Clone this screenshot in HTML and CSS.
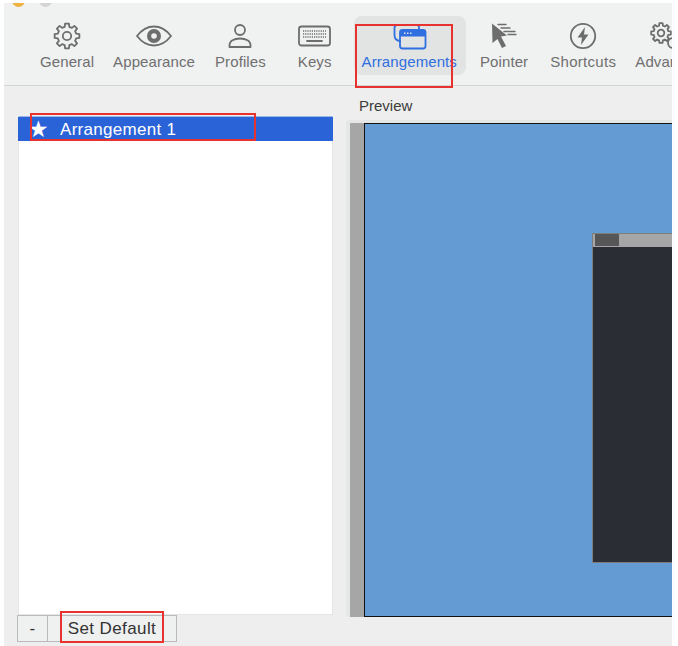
FILE: index.html
```html
<!DOCTYPE html>
<html lang="en">
<head>
<meta charset="utf-8">
<title>Arrangements</title>
<link rel="stylesheet" href="styles.css">
</head>
<body>
<div class="frame">
  <span class="light light-orange"></span>
  <span class="light light-gray"></span>
  <nav class="toolbar">
    <div class="tab tab-general">
      <svg class="icon" width="28" height="28" viewBox="-14 -14 28 28"><path class="line" d="M-1.96-12.35L1.96-12.35 2.3-9.2 4.89-8.14 7.35-10.1 10.1-7.35 8.14-4.89 9.2-2.3 12.35-1.96 12.35 1.96 9.2 2.3 8.14 4.89 10.1 7.35 7.35 10.1 4.89 8.14 2.3 9.2 1.96 12.35-1.96 12.35-2.3 9.2-4.89 8.14-7.35 10.1-10.1 7.35-8.14 4.89-9.2 2.3-12.35 1.96-12.35-1.96-9.2-2.3-8.14-4.89-10.1-7.35-7.35-10.1-4.89-8.14-2.3-9.2Z"/><circle class="line" r="4.2"/></svg>
      <span class="label">General</span>
    </div>
    <div class="tab tab-appearance">
      <svg class="icon" width="36" height="28" viewBox="0 0 36 28"><path class="line" d="M1 14C6 7.500 11.500 4.500 18 4.500S30 7.500 35 14C30 20.500 24.500 23.500 18 23.500S6 20.500 1 14Z"/><circle class="fill" cx="18" cy="14" r="7"/><circle class="pupil" cx="18" cy="14" r="2.800"/></svg>
      <span class="label">Appearance</span>
    </div>
    <div class="tab tab-profiles">
      <svg class="icon" width="26" height="28" viewBox="0 0 26 28"><circle class="line" cx="13" cy="8" r="5"/><path class="line" d="M2.500 25V23C2.500 19 7 16.500 13 16.500S23.500 19 23.500 23V25Z"/></svg>
      <span class="label">Profiles</span>
    </div>
    <div class="tab tab-keys">
      <svg class="icon" width="33" height="28" viewBox="0 0 33 28"><rect class="line" x="1" y="4.500" width="31" height="19" rx="2.500"/><path class="dots" d="M5 9H28M5 12H28M5 15H28"/><path class="line" d="M9 19H24"/></svg>
      <span class="label">Keys</span>
    </div>
    <div class="tab tab-active">
      <svg class="icon icon-blue" width="34" height="26" viewBox="0 0 34 26"><path class="line" d="M7 17Q1.500 16.500 1.500 11V3.500Q1.500 1 4 1H24Q26 1 26 3V6"/><rect class="line" x="7" y="6" width="25.500" height="18.500" rx="2.500"/><path class="fill" d="M7 8.500Q7 6 9.500 6H30Q32.500 6 32.500 8.500V12.500H7Z"/><path class="dots-light" d="M11 9.300H20"/></svg>
      <span class="label">Arrangements</span>
    </div>
    <div class="tab tab-pointer">
      <svg class="icon" width="30" height="28" viewBox="2 0 30 28"><path class="fill" d="M5 1.500L20 13.500 14 14.500 19 24 15 26 10.500 17 5.500 21Z"/><path class="line thin" d="M11 2.500H19M14 6H23M17 9.500H28M21 12.500H29"/></svg>
      <span class="label">Pointer</span>
    </div>
    <div class="tab tab-shortcuts">
      <svg class="icon" width="28" height="28" viewBox="0 0 28 28"><circle class="line" cx="14" cy="14" r="12.200"/><path class="fill" d="M16 5L8.500 15.500H13L12 23 19.500 12.500H15Z"/></svg>
      <span class="label">Shortcuts</span>
    </div>
    <div class="tab tab-advanced">
      <svg class="icon" width="38" height="28" viewBox="-11 -11 38 28"><path class="line" d="M-1.600-9.800L1.600-9.800 1.900-7.300 3.900-6.500 5.900-8 8-5.900 6.500-3.900 7.300-1.900 9.800-1.600 9.800 1.600 7.300 1.900 6.500 3.900 8 5.900 5.900 8 3.900 6.500 1.900 7.300 1.600 9.800-1.600 9.800-1.900 7.300-3.900 6.500-5.900 8-8 5.900-6.500 3.900-7.300 1.900-9.800 1.600-9.800-1.600-7.300-1.900-6.500-3.900-8-5.900-5.900-8-3.900-6.500-1.900-7.300Z"/><circle class="line" r="3.300"/><circle class="line" cx="12" cy="10" r="5"/></svg>
      <span class="label">Advanced</span>
    </div>
  </nav>
  <main class="content">
    <section class="sidebar">
      <div class="list">
        <div class="row"><span class="star">★</span><span class="row-text">Arrangement 1</span></div>
      </div>
      <div class="buttons">
        <div class="btn btn-minus">-</div>
        <div class="btn btn-default">Set Default</div>
      </div>
    </section>
    <section class="preview">
      <div class="preview-title">Preview</div>
      <div class="well">
        <div class="strip"></div>
        <div class="desktop">
          <div class="window">
            <div class="window-bar"><div class="window-tab"></div></div>
          </div>
        </div>
      </div>
    </section>
  </main>
  <div class="mark mark-tab"></div>
  <div class="mark mark-row"></div>
  <div class="mark mark-btn"></div>
</div>
</body>
</html>
```
FILE: styles.css
```css
* { box-sizing: border-box; }
html, body { margin: 0; padding: 0; background: #fff; }
body { font-family: "Liberation Sans", Arial, sans-serif; width: 678px; height: 646px; overflow: hidden; padding: 3px 6px 0 4px; }
.frame { position: relative; width: 668px; height: 643px; background: #edeeed; overflow: hidden; }
.light { position: absolute; top: -9px; width: 13px; height: 13px; border-radius: 50%; }
.light-orange { left: 8px; background: #eeb23f; }
.light-gray { left: 35px; background: #d4d4d4; }
.toolbar { display: flex; height: 83px; padding-left: 36px; background: #f0f1f1; border-bottom: 1px solid #d4d5d5; }
.tab { display: flex; flex-direction: column; align-items: center; height: 59px; margin-top: 13px; flex: none; }
.tab-appearance { margin-left: 19px; }
.tab-profiles { margin-left: 20px; }
.tab-keys { margin-left: 32px; }
.tab-active { margin-left: 22px; padding: 0 9px 0 8px; background: #e2e3e3; border-radius: 8px; }
.tab-pointer { margin-left: 14px; }
.tab-shortcuts { margin-left: 22px; }
.tab-advanced { margin-left: 19px; }
.icon { display: block; height: 28px; margin-top: 6px; flex: none; color: #6d6d6d; }
.line { fill: none; stroke: currentColor; stroke-width: 1.8; stroke-linejoin: round; stroke-linecap: round; }
.thin { stroke-width: 1.4; }
.fill { fill: currentColor; }
.pupil { fill: #f0f1f1; }
.dots { fill: none; stroke: currentColor; stroke-width: 1.6; stroke-dasharray: 1.2 1; }
.dots-light { fill: none; stroke: #e2e3e3; stroke-width: 1.5; stroke-dasharray: 1.500 1.500; }
.icon-blue { color: #2f6fe0; height: 26px; margin-top: 8px; margin-left: 2px; }
.label { margin-top: 3px; font-size: 15px; line-height: 17px; letter-spacing: 0.1px; color: #6f6f6f; white-space: nowrap; }
.tab-active .label { color: #2f6fe0; margin-top: 3px; }
.tab-shortcuts .label { letter-spacing: 0.3px; }
.content { display: flex; padding-left: 14px; }
.sidebar { width: 315px; margin-top: 30px; flex: none; }
.list { height: 499px; background: #fff; border: 1px solid #e4e5e5; border-top-color: #9db6e8; }
.row { display: flex; align-items: center; height: 24px; background: #2a63d8; color: #fff; margin: 0 -1px; }
.star { width: 42px; padding-left: 10px; font-size: 23px; line-height: 24px; }
.row-text { padding-top: 1px; font-size: 17px; letter-spacing: 0.3px; }
.buttons { display: flex; height: 27px; margin-left: -1px; }
.btn { display: flex; align-items: center; justify-content: center; border: 1px solid #b9baba; font-size: 17px; letter-spacing: 0.4px; color: #333; background: #eff0f0; }
.btn-minus { width: 31px; }
.btn-default { width: 130px; margin-left: -1px; }
.preview { margin-left: 13px; flex: 1; min-width: 0; }
.preview-title { margin-top: 11px; padding-left: 13px; height: 23px; font-size: 15px; line-height: 18px; color: #3c3c3c; }
.well { display: flex; height: 497px; padding: 3px 0 0 4px; background: #e5e6e6; border-radius: 4px 0 0 4px; }
.strip { width: 14px; background: #a6a6a6; flex: none; }
.desktop { position: relative; flex: 1; background: #659bd3; border: solid #111; border-width: 1.500px 0 1.500px 1px; }
.window { position: absolute; left: 227px; top: 109px; width: 90px; height: 330px; background: #2b2d35; border: 1px solid #7d7d7d; }
.window-bar { height: 13px; background: #a6a6a6; padding-left: 2px; }
.window-tab { width: 24px; height: 12px; background: #565656; }
.mark { position: absolute; border: 2px solid #e7322f; }
.mark-tab { left: 351px; top: 21px; width: 98px; height: 64px; }
.mark-row { left: 26px; top: 110px; width: 226px; height: 28px; }
.mark-btn { left: 56px; top: 608px; width: 104px; height: 32px; }
```
